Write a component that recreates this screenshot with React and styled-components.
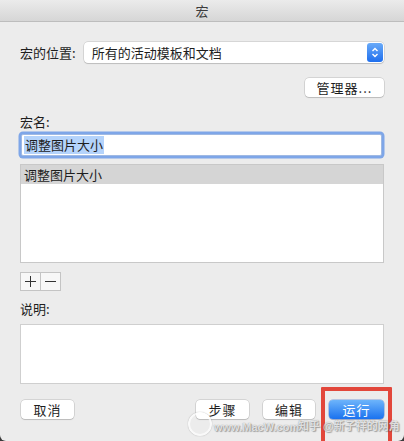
import React from "react";
import styled, { createGlobalStyle } from "styled-components";

const Global = createGlobalStyle`
  html, body { margin: 0; padding: 0; background: #3a3a3a; }
  body { font-family: "Noto Sans CJK SC", "Noto Sans", sans-serif; }
  * { box-sizing: border-box; }
`;

const Window = styled.div`
  position: relative;
  width: 404px;
  height: 441px;
  background: #ececec;
  border-radius: 0 0 6px 6px;
  overflow: hidden;
  color: #1e1e1e;
  font-size: 13px;
`;

const TitleBar = styled.div`
  height: 22px;
  background: linear-gradient(#ebebeb, #d6d6d6);
  border-bottom: 1px solid #bdbdbd;
  display: flex;
  align-items: center;
  justify-content: center;
  font-size: 13px;
  color: #3c3c3c;
`;

const Body = styled.div`
  display: flex;
  flex-direction: column;
  padding: 20px 20px 0 20px;
`;

const Row = styled.div`
  display: flex;
  align-items: center;
  justify-content: ${(p) => p.$justify || "flex-start"};
  margin-top: ${(p) => p.$mt || 0}px;
  gap: ${(p) => p.$gap || 0}px;
`;

const Label = styled.div`
  height: 16px;
  line-height: 16px;
  margin-top: ${(p) => p.$mt || 0}px;
  white-space: nowrap;
`;

const Select = styled.div`
  margin-left: 8px;
  flex: 1;
  height: 21px;
  background: #fff;
  border-radius: 4px;
  box-shadow: 0 0 0 0.5px rgba(0,0,0,0.18), 0 1px 1px rgba(0,0,0,0.12);
  display: flex;
  align-items: center;
  padding-left: 8px;
`;

const SelectText = styled.span`
  flex: 1;
`;

const Stepper = styled.div`
  width: 16px;
  height: 19px;
  margin-right: 1px;
  border-radius: 3px;
  background: linear-gradient(#69aaf8, #1f6fee);
  display: flex;
  align-items: center;
  justify-content: center;
`;

const Button = styled.div`
  width: ${(p) => p.$w}px;
  height: 19px;
  border-radius: 4px;
  background: ${(p) => (p.$primary ? "linear-gradient(#6db4fb, #1a72ef)" : "#fff")};
  color: ${(p) => (p.$primary ? "#fff" : "#1e1e1e")};
  box-shadow: ${(p) =>
    p.$primary
      ? "0 0 0 0.5px rgba(20,80,200,0.5), 0 1px 1px rgba(0,0,0,0.15)"
      : "0 0 0 0.5px rgba(0,0,0,0.2), 0 1px 1px rgba(0,0,0,0.12)"};
  display: flex;
  align-items: center;
  justify-content: center;
  font-size: 13px;
  letter-spacing: ${(p) => p.$ls || 0}px;
`;

const Input = styled.div`
  margin-top: 4px;
  margin-left: 1px;
  margin-right: 2px;
  height: 22px;
  background: #fff;
  border: 1px solid #9fb9e3;
  box-shadow: 0 0 0 2.5px #7ea6e8;
  border-radius: 2px;
  display: flex;
  align-items: center;
  padding-left: 2px;
`;

const Selected = styled.span`
  background: #b4d3fb;
  line-height: 18px;
  padding: 0 1px;
`;

const ListBox = styled.div`
  margin-top: 8px;
  height: 99px;
  background: #fff;
  border: 1px solid #c8c8c8;
`;

const ListRow = styled.div`
  height: 19px;
  background: #d5d5d5;
  display: flex;
  align-items: center;
  padding-left: 3px;
`;

const PlusMinus = styled.div`
  margin-top: 9px;
  display: flex;
  width: 41px;
  height: 19px;
  border: 1px solid #c4c4c4;
  background: #f7f7f7;
`;

const PMCell = styled.div`
  flex: 1;
  display: flex;
  align-items: center;
  justify-content: center;
  border-left: ${(p) => (p.$sep ? "1px solid #c4c4c4" : "none")};
`;

const DescBox = styled.div`
  margin-top: 7px;
  height: 60px;
  background: #fff;
  border: 1px solid #cfcfcf;
`;

const Footer = styled.div`
  margin-top: 16px;
  display: flex;
  align-items: center;
  padding-left: 1px;
`;

const Spacer = styled.div`
  flex: 1;
`;

const RedBox = styled.div`
  position: absolute;
  left: 321px;
  top: 387px;
  width: 71px;
  height: 60px;
  border: 4px solid #e2473b;
  border-radius: 1px;
`;

const Watermark = styled.div`
  position: absolute;
  left: ${(p) => p.$x}px;
  top: ${(p) => p.$y}px;
  font-family: "Liberation Sans", "Noto Sans CJK SC", sans-serif;
  font-size: ${(p) => p.$size}px;
  line-height: ${(p) => p.$size + 2}px;
  font-weight: bold;
  color: rgba(255,255,255,0.75);
  text-shadow: 0 0 1px rgba(90,90,90,0.7), 1px 1px 1px rgba(60,60,60,0.4);
  white-space: nowrap;
  pointer-events: none;
`;

const Logo = styled.div`
  position: absolute;
  left: 188px;
  top: 412px;
  width: 24px;
  height: 24px;
  border-radius: 50%;
  border: 2px solid rgba(255,255,255,0.7);
  box-shadow: 0 0 1px rgba(80,80,80,0.6);
`;

export default function App() {
  return (
    <>
      <Global />
      <Window>
        <TitleBar>宏</TitleBar>
        <Body>
          <Row>
            <Label>宏的位置:</Label>
            <Select>
              <SelectText>所有的活动模板和文档</SelectText>
              <Stepper>
                <svg width="8" height="13" viewBox="0 0 8 13">
                  <path d="M1.5 5 L4 2.5 L6.5 5" fill="none" stroke="#fff" strokeWidth="1.4" />
                  <path d="M1.5 8 L4 10.5 L6.5 8" fill="none" stroke="#fff" strokeWidth="1.4" />
                </svg>
              </Stepper>
            </Select>
          </Row>
          <Row $justify="flex-end" $mt={15}>
            <Button $w={79} $ls={1}>管理器...</Button>
          </Row>
          <Label $mt={17}>宏名:</Label>
          <Input>
            <Selected>调整图片大小</Selected>
          </Input>
          <ListBox>
            <ListRow>调整图片大小</ListRow>
          </ListBox>
          <PlusMinus>
            <PMCell>
              <svg width="11" height="11" viewBox="0 0 11 11">
                <path d="M5.5 0 V11 M0 5.5 H11" stroke="#333" strokeWidth="1" />
              </svg>
            </PMCell>
            <PMCell $sep>
              <svg width="11" height="11" viewBox="0 0 11 11">
                <path d="M0 5.5 H11" stroke="#333" strokeWidth="1" />
              </svg>
            </PMCell>
          </PlusMinus>
          <Label $mt={10}>说明:</Label>
          <DescBox />
          <Footer>
            <Button $w={53} $ls={1}>取消</Button>
            <Spacer />
            <Row $gap={14}>
              <Button $w={53} $ls={1}>步骤</Button>
              <Button $w={52} $ls={1}>编辑</Button>
              <Button $w={55} $primary $ls={1}>运行</Button>
            </Row>
          </Footer>
        </Body>
        <RedBox />
        <Logo />
        <Watermark $x={214} $y={421} $size={11}>www.MacW.com</Watermark>
        <Watermark $x={298} $y={420} $size={11}>知乎 @新子祥的网角</Watermark>
      </Window>
    </>
  );
}
